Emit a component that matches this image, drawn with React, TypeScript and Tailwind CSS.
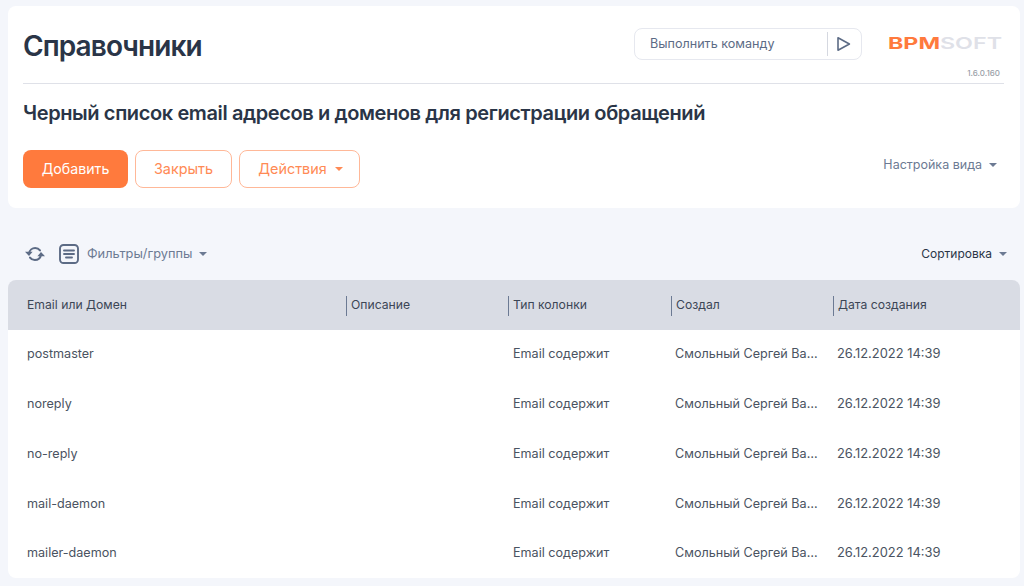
const rows = ["postmaster", "noreply", "no-reply", "mail-daemon", "mailer-daemon"];

const columns = [
  { label: "Email или Домен", width: "w-[338px]", first: true },
  { label: "Описание", width: "w-[162px]" },
  { label: "Тип колонки", width: "w-[163px]" },
  { label: "Создал", width: "w-[162px]" },
  { label: "Дата создания", width: "flex-1" },
];

function Caret({ className }: { className: string }) {
  return <span className={`inline-block w-0 h-0 border-x-[4px] border-x-transparent border-t-[4px] ${className}`} />;
}

function Logo() {
  return (
    <svg width="116" height="18" viewBox="0 0 116 18" className="block">
      <text x="0" y="16" fontFamily="Inter, sans-serif" fontWeight="700" fontSize="16" fill="#ff7a3d" textLength="52" lengthAdjust="spacingAndGlyphs">
        BPM
      </text>
      <text x="52" y="16" fontFamily="Inter, sans-serif" fontWeight="600" fontSize="16" fill="#dfe1e8" textLength="62" lengthAdjust="spacingAndGlyphs">
        SOFT
      </text>
    </svg>
  );
}

export default function App() {
  return (
    <div className="w-[1024px] h-[586px] overflow-hidden bg-[#f4f6fb] pt-[6px] pl-2 pr-1 font-['Inter',sans-serif] text-[13px]">
      {/* Header card */}
      <div className="h-[202px] bg-white rounded-lg pl-[15px] pr-[16px]">
        <div className="flex items-start border-b border-[#dfe1e8] h-[78px]">
          <h1 className="text-[28px] leading-[36px] mt-[22px] font-semibold text-[#2a3547] tracking-[-0.9px]">Справочники</h1>
          <div className="ml-auto mt-[22px] flex items-center w-[228px] h-8 border border-[#e6e8ef] rounded-lg pl-[15px] pr-2">
            <span className="text-[12.6px] text-[#5c6b85] flex-1">Выполнить команду</span>
            <span className="w-px h-6 bg-[#d5d8e0] mr-[8px]" />
            <svg width="15" height="16" viewBox="0 0 15 16" fill="none" stroke="#5c6b85" strokeWidth="1.6" strokeLinejoin="round" className="mr-[2px]">
              <path d="M2 1.800 13.400 8 2 14.200Z" />
            </svg>
          </div>
          <div className="ml-[26px] mt-[27px] w-[116px] flex flex-col items-end">
            <Logo />
            <span className="text-[8px] leading-[10px] mt-[17px] mr-[4px] text-[#9a9fa8] font-medium">1.6.0.160</span>
          </div>
        </div>
        <h2 className="mt-[15px] text-[20px] leading-[28px] font-semibold text-[#2a3547] tracking-[-0.39px]">
          Черный список email адресов и доменов для регистрации обращений
        </h2>
        <div className="flex items-center mt-[23px]">
          <button className="w-[105px] h-[38px] rounded-lg bg-[#ff7a3d] text-white text-[14.2px]">Добавить</button>
          <button className="ml-[7px] w-[97px] h-[38px] rounded-lg border border-[#ffb898] text-[#ff8a55] text-[14.4px]">Закрыть</button>
          <button className="ml-[7px] w-[121px] h-[38px] rounded-lg border border-[#ffb898] text-[#ff8a55] text-[14.4px] flex items-center justify-center gap-[8px] pl-[2px]">
            Действия
            <Caret className="border-t-[#ff8a55]" />
          </button>
          <div className="ml-auto mb-[8px] mr-[7px] flex items-center gap-[7px] text-[#6c7a93] text-[12.5px]">
            Настройка вида
            <Caret className="border-t-[#6c7a93]" />
          </div>
        </div>
      </div>

      {/* Toolbar */}
      <div className="h-[72px] flex items-center pt-[20px] pl-[17px] pr-[13px]">
        <svg width="20" height="18" viewBox="0 0 20 18" fill="none" stroke="#5c6b85" strokeWidth="2" strokeLinecap="round">
          <path d="M4 8.200C4.600 5.200 7.200 3 10.200 3c2 0 3.700.9 4.800 2.400" />
          <path d="M16 10C15.400 12.900 12.800 15 9.800 15c-2 0-3.700-.9-4.800-2.400" />
          <path d="M0 6.800h7.600L4 11Z" fill="#5c6b85" stroke="none" />
          <path d="M20 11.200h-7.600L16 7Z" fill="#5c6b85" stroke="none" />
        </svg>
        <svg width="20" height="20" viewBox="0 0 20 20" fill="none" stroke="#5c6b85" strokeWidth="1.9" strokeLinecap="round" className="ml-[14px]">
          <rect x="1" y="1" width="18" height="18" rx="3.500" />
          <path d="M5 6.500h10M5 10h10M7 13.500h6" />
        </svg>
        <span className="ml-[8px] text-[12.8px] text-[#6c7a93]">Фильтры/группы</span>
        <Caret className="ml-[7px] border-t-[#6c7a93]" />
        <div className="ml-auto flex items-center gap-[7px] text-[#2a3547] text-[12px]">
          Сортировка
          <Caret className="border-t-[#6c7a93]" />
        </div>
      </div>

      {/* Table */}
      <div className="rounded-lg overflow-hidden h-[298px]">
        <div className="flex items-center h-[50px] bg-[#d9dce4] text-[#3c4656] text-[12.2px] pt-[1px]">
          {columns.map((c) => (
            <div key={c.label} className={`${c.width} h-[20px] flex items-center ${c.first ? "pl-[19px]" : "border-l border-[#6c7a93] pl-1"}`}>
              {c.label}
            </div>
          ))}
        </div>
        <div className="bg-white text-[#4a5361] text-[12.6px] h-[248px]">
          {rows.map((r) => (
            <div key={r} className="flex items-center h-[50px] pb-[1px] last:h-[48px]">
              <div className="w-[338px] pl-[19px]">{r}</div>
              <div className="w-[162px]" />
              <div className="w-[163px] pl-[5px]">Email содержит</div>
              <div className="w-[162px] pl-[4px] pr-[14px] truncate">Смольный Сергей Васильевич</div>
              <div className="flex-1 pl-[4px] pb-[1px] text-[12.9px]">26.12.2022 14:39</div>
            </div>
          ))}
        </div>
      </div>
    </div>
  );
}
